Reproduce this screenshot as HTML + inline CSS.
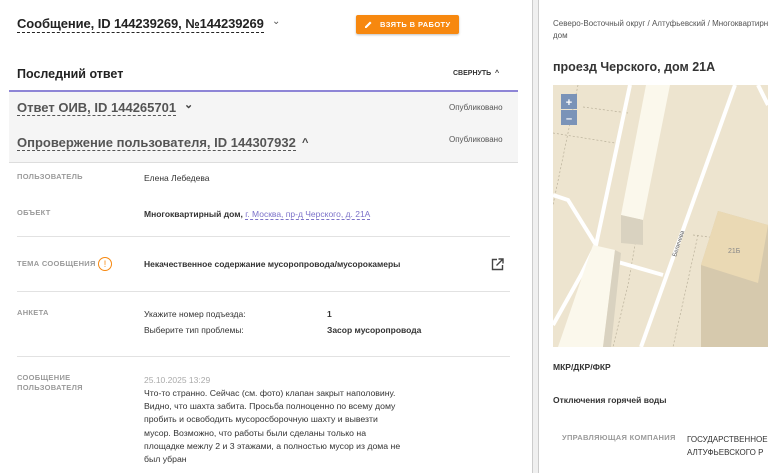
<!DOCTYPE html>
<html><head><meta charset="utf-8"><style>
*{margin:0;padding:0;box-sizing:border-box}
body{width:768px;height:473px;overflow:hidden;background:#fff;font-family:"Liberation Sans",Roboto,sans-serif;color:#333;position:relative}
.a{position:absolute;white-space:nowrap}
.lbl{font-size:7.5px;color:#9a9a9a;font-weight:bold;letter-spacing:.3px}
.v{font-size:8.5px;color:#333}
.hr{position:absolute;left:17px;width:493px;height:1px;background:#e2e2e2}
</style></head><body>
<div class="a" style="left:17px;top:16px;font-size:13px;font-weight:bold;color:#222;border-bottom:1px dashed #222;line-height:16px;letter-spacing:-.1px">Сообщение, ID 144239269, №144239269</div>
<div class="a" style="left:272px;top:16px;font-size:10px;color:#555">&#8964;</div>
<div class="a" style="left:356px;top:15px;width:103px;height:19px;background:#f7880f;border-radius:2px;color:#fff;font-size:7.5px;font-weight:bold;line-height:19px;padding-left:24px;letter-spacing:.4px;box-shadow:0 1px 2px rgba(0,0,0,.25)">ВЗЯТЬ В РАБОТУ</div>
<svg class="a" style="left:364px;top:20px" width="9" height="9" viewBox="0 0 9 9"><path d="M1 8 L1 6.5 L6 1.5 L7.5 3 L2.5 8Z" fill="#fff"/></svg>
<div class="a" style="left:17px;top:67px;font-size:12.5px;font-weight:bold;color:#222">Последний ответ</div>
<div class="a" style="left:453px;top:70px;font-size:7px;font-weight:bold;color:#333">СВЕРНУТЬ &nbsp;^</div>
<div class="a" style="left:9px;top:90px;width:509px;height:2px;background:#8e85d6"></div>
<div class="a" style="left:9px;top:92px;width:509px;height:70px;background:#f5f5f5"></div>
<div class="a" style="left:9px;top:162px;width:509px;height:1px;background:#ddd"></div>
<div class="a" style="left:17px;top:100px;font-size:13px;font-weight:bold;color:#555;border-bottom:1px dashed #555;line-height:15px">Ответ ОИВ, ID 144265701</div>
<div class="a" style="left:184px;top:98px;font-size:11px;font-weight:bold;color:#444">&#8964;</div>
<div class="a" style="left:449px;top:103px;font-size:8px;color:#555">Опубликовано</div>
<div class="a" style="left:17px;top:135px;font-size:13px;font-weight:bold;color:#555;border-bottom:1px dashed #555;line-height:15px">Опровержение пользователя, ID 144307932</div>
<div class="a" style="left:302px;top:137px;font-size:11px;font-weight:bold;color:#444">^</div>
<div class="a" style="left:449px;top:135px;font-size:8px;color:#555">Опубликовано</div>

<div class="a lbl" style="left:17px;top:172px">ПОЛЬЗОВАТЕЛЬ</div>
<div class="a v" style="left:144px;top:173px">Елена Лебедева</div>
<div class="a lbl" style="left:17px;top:208px">ОБЪЕКТ</div>
<div class="a v" style="left:144px;top:209px;font-weight:bold">Многоквартирный дом, <span style="color:#7c72c9;font-weight:normal;border-bottom:1px dashed #7c72c9">г. Москва, пр-д Черского, д. 21А</span></div>
<div class="hr" style="top:236px"></div>
<div class="a lbl" style="left:17px;top:259px">ТЕМА СООБЩЕНИЯ</div>
<div class="a" style="left:98px;top:257px;width:14px;height:14px;border:1.3px solid #f7880f;border-radius:50%;color:#f7880f;font-size:9px;text-align:center;line-height:12px">!</div>
<div class="a v" style="left:144px;top:259px;font-weight:bold">Некачественное содержание мусоропровода/мусорокамеры</div>
<svg class="a" style="left:491px;top:258px" width="13" height="13" viewBox="0 0 13 13"><path d="M6 1.5H1.5V11.5H11.5V7" fill="none" stroke="#444" stroke-width="1.4"/><path d="M7.5 1H12V5.5M12 1L5.5 7.5" fill="none" stroke="#444" stroke-width="1.4"/></svg>
<div class="hr" style="top:291px"></div>
<div class="a lbl" style="left:17px;top:308px">АНКЕТА</div>
<div class="a v" style="left:144px;top:309px">Укажите номер подъезда:</div>
<div class="a v" style="left:327px;top:309px;font-weight:bold">1</div>
<div class="a v" style="left:144px;top:325px">Выберите тип проблемы:</div>
<div class="a v" style="left:327px;top:325px;font-weight:bold">Засор мусоропровода</div>
<div class="hr" style="top:356px"></div>
<div class="a lbl" style="left:17px;top:373px;line-height:10px">СООБЩЕНИЕ<br>ПОЛЬЗОВАТЕЛЯ</div>
<div class="a" style="left:144px;top:375px;font-size:8.5px;color:#aaa">25.10.2025 13:29</div>
<div class="a v" style="left:144px;top:387px;line-height:13.2px;font-size:8.7px">Что-то странно. Сейчас (см. фото) клапан закрыт наполовину.<br>Видно, что шахта забита. Просьба полноценно по всему дому<br>пробить и освободить мусоросборочную шахту и вывезти<br>мусор. Возможно, что работы были сделаны только на<br>площадке межлу 2 и 3 этажами, а полностью мусор из дома не<br>был убран</div>

<div class="a" style="left:532px;top:0;width:7px;height:473px;background:#f0f0f0;border-left:1px solid #ccc;border-right:1px solid #ccc"></div>
<div class="a" style="left:553px;top:18px;font-size:8px;color:#555;line-height:12px">Северо-Восточный округ / Алтуфьевский / Многоквартирный<br>дом</div>
<div class="a" style="left:553px;top:60px;font-size:12.5px;font-weight:bold;color:#333">проезд Черского, дом 21А</div>
<svg class="a" style="left:553px;top:85px" width="215" height="262" viewBox="0 0 215 262">
<rect width="215" height="262" fill="#ede4cf"/>
<g stroke="#b9b09a" stroke-dasharray="2 2" fill="none" stroke-width=".7"><path d="M0 48L62 58M30 22L75 28M25 0L0 120M110 0L75 200L60 262M145 150L120 262M140 150L180 155"/></g>
<g stroke="#fff" stroke-width="4" fill="none"><path d="M182 0L88 262"/><path d="M77 0L43 160L28 190L0 240"/><path d="M0 110L15 115L43 160"/><path d="M58 175L110 190"/><path d="M152 175L203 190L200 240"/><path d="M205 0L215 20"/></g>
<path d="M93 0L117 0L90 135L68 130Z" fill="#fbf8ec"/><path d="M68 130L90 135L90 160L68 158Z" fill="#d9d2c0"/>
<path d="M40 160L62 165L50 262L5 262Z" fill="#fbf8ec"/><path d="M62 165L68 168L58 262L50 262Z" fill="#d9d2c0"/>
<path d="M165 126L215 140L215 262L148 262L148 180Z" fill="#d6c9ad"/><path d="M165 126L215 140L205 198L148 180Z" fill="#ead9b4"/>
<text x="175" y="168" font-size="7" fill="#888" font-family="Liberation Sans">21Б</text>
<text transform="translate(123 172) rotate(-72)" font-size="6" fill="#555" font-family="Liberation Sans">Беличева</text>
<rect x="8" y="9" width="16" height="15" fill="#7a93b8"/><rect x="8" y="25" width="16" height="15" fill="#7a93b8"/>
<text x="16" y="21" font-size="11" fill="#fff" text-anchor="middle" font-family="Liberation Sans" font-weight="bold">+</text>
<text x="16" y="37" font-size="11" fill="#fff" text-anchor="middle" font-family="Liberation Sans" font-weight="bold">–</text>
</svg>
<div class="a" style="left:553px;top:362px;font-size:8.5px;font-weight:bold;color:#333">МКР/ДКР/ФКР</div>
<div class="a" style="left:553px;top:395px;font-size:8.5px;font-weight:bold;color:#333">Отключения горячей воды</div>
<div class="a lbl" style="left:562px;top:433px">УПРАВЛЯЮЩАЯ КОМПАНИЯ</div>
<div class="a" style="left:687px;top:433px;font-size:8px;color:#333;line-height:13px">ГОСУДАРСТВЕННОЕ<br>АЛТУФЬЕВСКОГО Р</div>
</body></html>
